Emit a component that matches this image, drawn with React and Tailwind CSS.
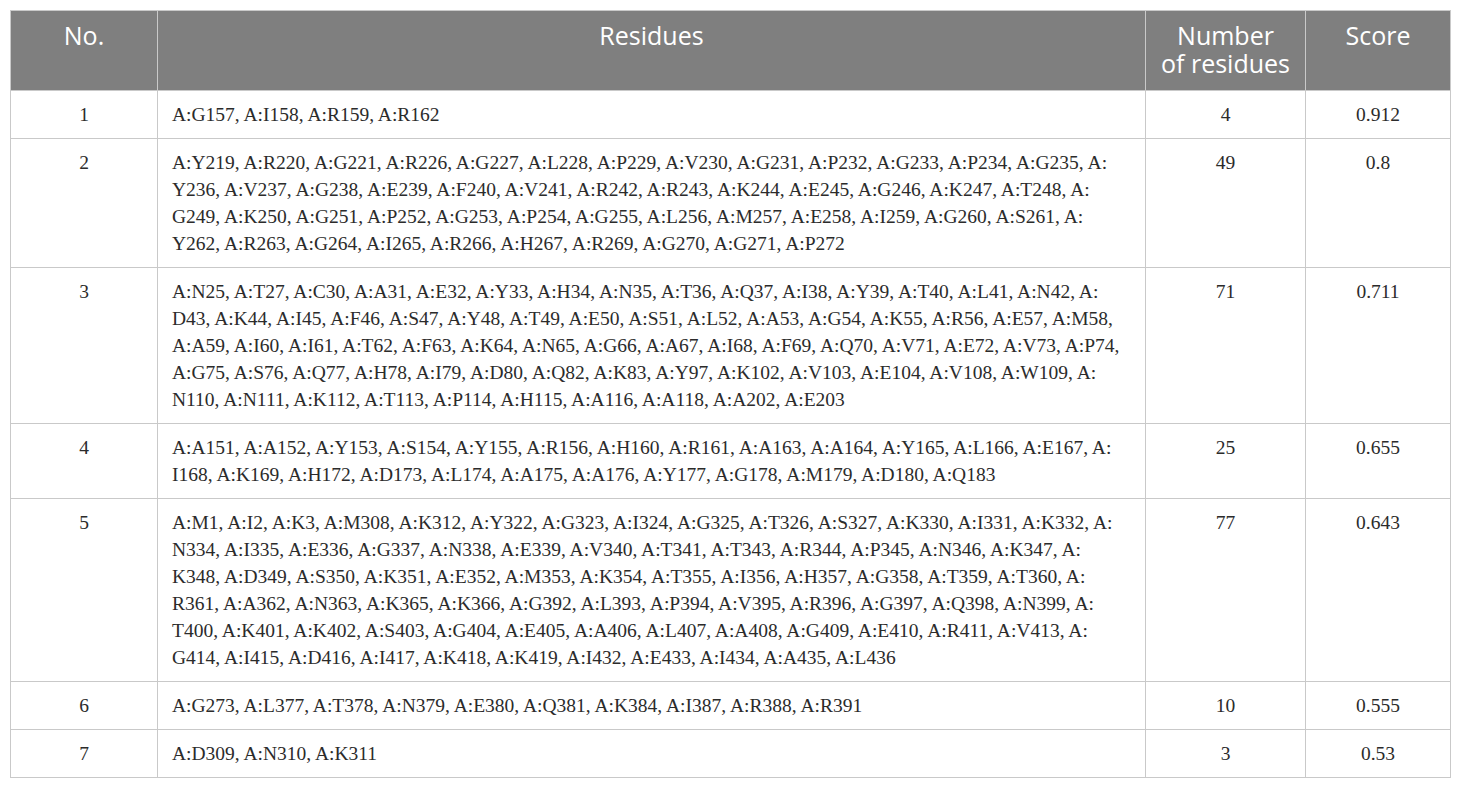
const rows = [
  { no: 1, lines: ['A:G157, A:I158, A:R159, A:R162'], count: 4, score: '0.912' },
  {
    no: 2,
    lines: [
      'A:Y219, A:R220, A:G221, A:R226, A:G227, A:L228, A:P229, A:V230, A:G231, A:P232, A:G233, A:P234, A:G235, A:',
      'Y236, A:V237, A:G238, A:E239, A:F240, A:V241, A:R242, A:R243, A:K244, A:E245, A:G246, A:K247, A:T248, A:',
      'G249, A:K250, A:G251, A:P252, A:G253, A:P254, A:G255, A:L256, A:M257, A:E258, A:I259, A:G260, A:S261, A:',
      'Y262, A:R263, A:G264, A:I265, A:R266, A:H267, A:R269, A:G270, A:G271, A:P272',
    ],
    count: 49,
    score: '0.8',
  },
  {
    no: 3,
    lines: [
      'A:N25, A:T27, A:C30, A:A31, A:E32, A:Y33, A:H34, A:N35, A:T36, A:Q37, A:I38, A:Y39, A:T40, A:L41, A:N42, A:',
      'D43, A:K44, A:I45, A:F46, A:S47, A:Y48, A:T49, A:E50, A:S51, A:L52, A:A53, A:G54, A:K55, A:R56, A:E57, A:M58,',
      'A:A59, A:I60, A:I61, A:T62, A:F63, A:K64, A:N65, A:G66, A:A67, A:I68, A:F69, A:Q70, A:V71, A:E72, A:V73, A:P74,',
      'A:G75, A:S76, A:Q77, A:H78, A:I79, A:D80, A:Q82, A:K83, A:Y97, A:K102, A:V103, A:E104, A:V108, A:W109, A:',
      'N110, A:N111, A:K112, A:T113, A:P114, A:H115, A:A116, A:A118, A:A202, A:E203',
    ],
    count: 71,
    score: '0.711',
  },
  {
    no: 4,
    lines: [
      'A:A151, A:A152, A:Y153, A:S154, A:Y155, A:R156, A:H160, A:R161, A:A163, A:A164, A:Y165, A:L166, A:E167, A:',
      'I168, A:K169, A:H172, A:D173, A:L174, A:A175, A:A176, A:Y177, A:G178, A:M179, A:D180, A:Q183',
    ],
    count: 25,
    score: '0.655',
  },
  {
    no: 5,
    lines: [
      'A:M1, A:I2, A:K3, A:M308, A:K312, A:Y322, A:G323, A:I324, A:G325, A:T326, A:S327, A:K330, A:I331, A:K332, A:',
      'N334, A:I335, A:E336, A:G337, A:N338, A:E339, A:V340, A:T341, A:T343, A:R344, A:P345, A:N346, A:K347, A:',
      'K348, A:D349, A:S350, A:K351, A:E352, A:M353, A:K354, A:T355, A:I356, A:H357, A:G358, A:T359, A:T360, A:',
      'R361, A:A362, A:N363, A:K365, A:K366, A:G392, A:L393, A:P394, A:V395, A:R396, A:G397, A:Q398, A:N399, A:',
      'T400, A:K401, A:K402, A:S403, A:G404, A:E405, A:A406, A:L407, A:A408, A:G409, A:E410, A:R411, A:V413, A:',
      'G414, A:I415, A:D416, A:I417, A:K418, A:K419, A:I432, A:E433, A:I434, A:A435, A:L436',
    ],
    count: 77,
    score: '0.643',
  },
  {
    no: 6,
    lines: ['A:G273, A:L377, A:T378, A:N379, A:E380, A:Q381, A:K384, A:I387, A:R388, A:R391'],
    count: 10,
    score: '0.555',
  },
  { no: 7, lines: ['A:D309, A:N310, A:K311'], count: 3, score: '0.53' },
];

const cell = "border border-[#c9c9c9] py-[10px] align-top font-['Liberation_Serif',serif] text-[19.5px] leading-[27px]";

export default function App() {
  return (
    <div className="min-h-[794px] bg-white px-[10px] pt-[10px]">
      <table className="w-[1440px] table-fixed border-collapse border border-[#c9c9c9] text-[#2b2b2b]">
        <colgroup>
          <col className="w-[147px]" />
          <col className="w-[988px]" />
          <col className="w-[160px]" />
          <col className="w-[145px]" />
        </colgroup>
        <thead>
          <tr className="h-[80px] bg-[#7f7f7f] text-white font-['Open_Sans',sans-serif] text-[25px] leading-[28px]">
            <th className="border border-[#c9c9c9] px-1 pt-[10px] align-top font-normal">No.</th>
            <th className="border border-[#c9c9c9] px-1 pt-[10px] align-top font-normal">Residues</th>
            <th className="border border-[#c9c9c9] px-1 pt-[10px] align-top font-normal">
              Number
              <br />
              of residues
            </th>
            <th className="border border-[#c9c9c9] px-1 pt-[10px] align-top font-normal">Score</th>
          </tr>
        </thead>
        <tbody>
          {rows.map((r) => (
            <tr key={r.no}>
              <td className={`${cell} text-center`}>{r.no}</td>
              <td className={`${cell} pl-[14px]`}>
                {r.lines.map((l, i) => (
                  <div key={i} className="whitespace-nowrap">
                    {l}
                  </div>
                ))}
              </td>
              <td className={`${cell} text-center`}>{r.count}</td>
              <td className={`${cell} text-center`}>{r.score}</td>
            </tr>
          ))}
        </tbody>
      </table>
    </div>
  );
}
